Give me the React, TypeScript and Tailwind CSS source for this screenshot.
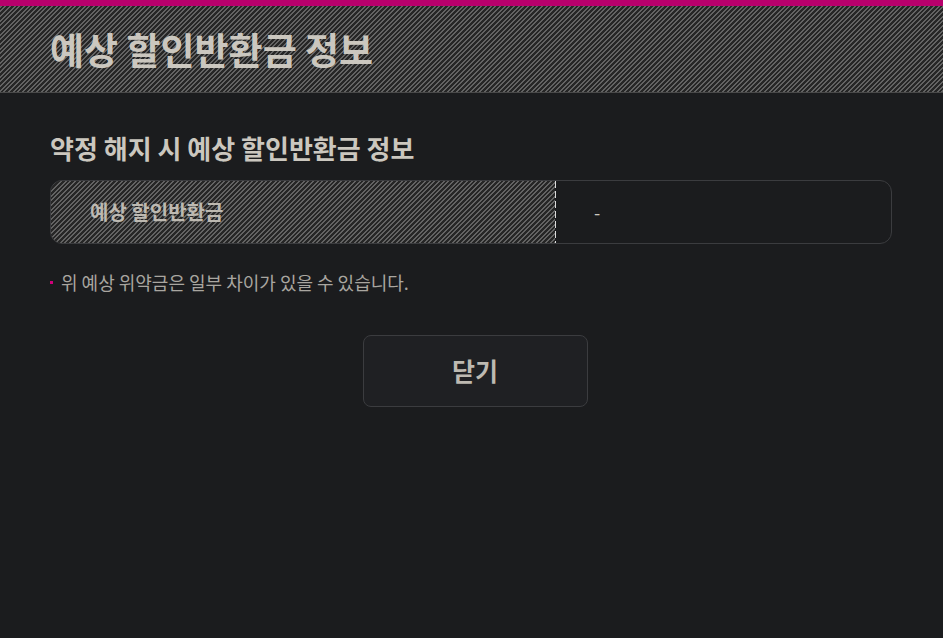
const stripes = {
  backgroundImage:
    'repeating-linear-gradient(135deg, #636363 0px, #636363 1.6px, #262626 1.6px, #262626 3.3px)',
};

const dashes = {
  backgroundImage: 'repeating-linear-gradient(to bottom, #dcdcdc 0px, #dcdcdc 7px, transparent 7px, transparent 10px)',
};

export default function App() {
  return (
    <div className="min-h-[638px] w-full bg-[#1b1c1e] font-['Noto_Sans_CJK_KR','Noto_Sans',sans-serif] text-[#cbc7bf]">
      {/* top accent */}
      <div className="h-[6px] bg-[#b8006c]" />

      {/* header */}
      <header
        className="flex h-[87px] items-center border-b border-[#4a4a4a] pl-[50px]"
        style={stripes}
      >
        <h1 className="text-[37px] font-bold leading-none">예상 할인반환금 정보</h1>
      </header>

      <main className="pl-[50px] pr-[43px] pt-[38px]">
        <h2 className="text-[26px] font-bold leading-[34px]">약정 해지 시 예상 할인반환금 정보</h2>

        <div className="mt-[15px] flex h-[64px] w-[842px] overflow-hidden rounded-[12px] border border-[#3b3c3f]">
          <div className="flex w-[504px] items-center pl-[39px]" style={stripes}>
            <span className="text-[20px] font-bold text-[#bdb9b1]">예상 할인반환금</span>
          </div>
          <div className="w-px" style={dashes} />
          <div className="flex flex-1 items-center pl-[38px] text-[18px]">-</div>
        </div>

        <p className="mt-[25px] flex items-center gap-[8px] text-[18px] text-[#a9a6a0]">
          <span className="h-[3px] w-[3px] bg-[#d0007a]" />
          위 예상 위약금은 일부 차이가 있을 수 있습니다.
        </p>

        <div className="mt-[39px] flex justify-center">
          <button className="flex h-[72px] w-[225px] items-center justify-center rounded-[8px] border border-[#3b3c3f] bg-[#1f2023] text-[25px] font-bold text-[#bdb9b1]">
            닫기
          </button>
        </div>
      </main>
    </div>
  );
}
